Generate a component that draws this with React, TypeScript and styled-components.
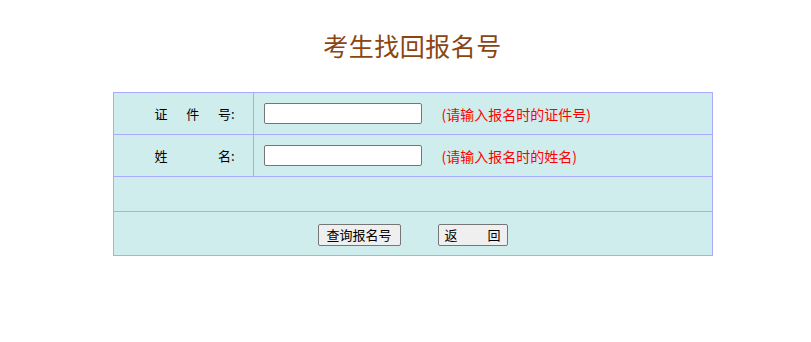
import styled, { createGlobalStyle } from "styled-components";

const GlobalStyle = createGlobalStyle`
  body {
    margin: 0;
    background: #ffffff;
    font-family: "Noto Sans CJK SC", "Liberation Sans", sans-serif;
  }
`;

const Page = styled.div`
  display: flex;
  flex-direction: column;
  align-items: center;
  padding-left: 14px;
`;

const Title = styled.h1`
  margin: 27px 0 29px;
  font-size: 25px;
  font-weight: 400;
  line-height: 36px;
  color: #8b4513;
  letter-spacing: 0.5px;
`;

const Table = styled.table`
  width: 600px;
  border-collapse: collapse;
  background: #cfeded;
  font-size: 13px;
  color: #000;
`;

const Cell = styled.td<{ $h: number }>`
  border: 1px solid #aaaaff;
  height: ${({ $h }) => $h}px;
  padding: 0;
  vertical-align: middle;
`;

const LabelCell = styled(Cell)`
  width: 140px;
  padding-right: 18px;
  box-sizing: border-box;
`;

const Label = styled.div`
  display: flex;
  justify-content: space-between;
  width: 80px;
  margin-left: auto;
`;

const FieldRow = styled.div`
  display: flex;
  align-items: center;
  gap: 20px;
  padding-left: 10px;
`;

const Input = styled.input`
  width: 158px;
  height: 21px;
  box-sizing: border-box;
  border: 1px solid #767676;
  border-radius: 2px;
  background: #fff;
  padding: 1px 2px;
`;

const Hint = styled.span`
  color: #ff0000;
  font-size: 14px;
`;

const Buttons = styled.div`
  display: flex;
  justify-content: center;
  gap: 37px;
  padding-top: 2px;
`;

const Button = styled.button<{ $w: number }>`
  width: ${({ $w }) => $w}px;
  height: 22px;
  box-sizing: border-box;
  border: 1px solid #767676;
  border-radius: 2px;
  background: #efefef;
  font-family: "Noto Sans CJK SC", "Liberation Sans", sans-serif;
  font-size: 13px;
  line-height: 18px;
  padding: 0 6px;
  color: #000;
  display: flex;
  align-items: center;
  justify-content: space-between;
`;

export default function App() {
  return (
    <>
      <GlobalStyle />
      <Page>
        <Title>考生找回报名号</Title>
        <Table>
          <tbody>
            <tr>
              <LabelCell $h={41}>
                <Label>
                  <span>证</span>
                  <span>件</span>
                  <span>号:</span>
                </Label>
              </LabelCell>
              <Cell $h={41}>
                <FieldRow>
                  <Input type="text" />
                  <Hint>(请输入报名时的证件号)</Hint>
                </FieldRow>
              </Cell>
            </tr>
            <tr>
              <LabelCell $h={41}>
                <Label>
                  <span>姓</span>
                  <span>名:</span>
                </Label>
              </LabelCell>
              <Cell $h={41}>
                <FieldRow>
                  <Input type="text" />
                  <Hint>(请输入报名时的姓名)</Hint>
                </FieldRow>
              </Cell>
            </tr>
            <tr>
              <Cell $h={34} colSpan={2} />
            </tr>
            <tr>
              <Cell $h={43} colSpan={2}>
                <Buttons>
                  <Button $w={83} style={{ justifyContent: "center" }}>查询报名号</Button>
                  <Button $w={70}>
                    <span>返</span>
                    <span>回</span>
                  </Button>
                </Buttons>
              </Cell>
            </tr>
          </tbody>
        </Table>
      </Page>
    </>
  );
}
